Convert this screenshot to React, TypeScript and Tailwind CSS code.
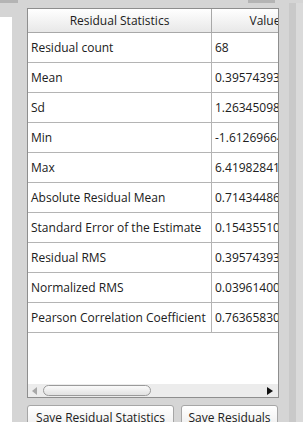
import React from "react";

const rows: [string, string][] = [
  ["Residual count", "68"],
  ["Mean", "0.395743936"],
  ["Sd", "1.263450981"],
  ["Min", "-1.612696641"],
  ["Max", "6.419828411"],
  ["Absolute Residual Mean", "0.714344861"],
  ["Standard Error of the Estimate", "0.154355101"],
  ["Residual RMS", "0.395743936"],
  ["Normalized RMS", "0.039614001"],
  ["Pearson Correlation Coefficient", "0.763658301"],
];

export default function App() {
  return (
    <div
      className="flex h-[422px] w-[303px] flex-col overflow-hidden bg-[#d5d5d5] text-[12px] text-[#202020]"
      style={{ fontFamily: '"Open Sans", "Noto Sans", sans-serif' }}
    >
      {/* bits of widgets above */}
      <div className="flex h-[3px] shrink-0">
        <div className="w-[18px] bg-[#b4b4b4]" />
        <div className="ml-[230px] w-[27px] bg-[#b4b4b4]" />
      </div>

      <div className="flex flex-1">
        {/* left pane */}
        <div className="flex w-[12px] flex-col">
          <div className="h-[14px]" />
          <div className="flex-1 bg-white" />
        </div>

        <div className="w-[15px]" />

        {/* main panel */}
        <div className="flex w-[252px] flex-col pt-[5px]">
          <div className="flex h-[390px] flex-col border border-[#8e8e8e] bg-white">
            <div className="flex-1 overflow-hidden">
              <div className="w-[290px]">
                <div className="flex h-[24px] border-b border-[#a8a8a8] bg-gradient-to-b from-white to-[#e8e8e8]">
                  <div className="flex w-[184px] items-center justify-center border-r border-[#a8a8a8]">
                    Residual Statistics
                  </div>
                  <div className="flex w-[106px] items-center justify-center">Value</div>
                </div>
                {rows.map(([k, v]) => (
                  <div key={k} className="flex h-[30px] border-b border-[#b4b4b4]">
                    <div className="flex w-[184px] items-center whitespace-nowrap border-r border-[#b4b4b4] pl-[3px]">
                      {k}
                    </div>
                    <div className="flex w-[106px] items-center whitespace-nowrap pl-[3px]">{v}</div>
                  </div>
                ))}
              </div>
            </div>

            {/* horizontal scrollbar */}
            <div className="flex h-[13px] items-center bg-[#ececec] px-[3px]">
              <svg width="7" height="8" viewBox="0 0 7 8" className="shrink-0">
                <path d="M6 0 L1 4 L6 8 Z" fill="#a8a8a8" />
              </svg>
              <div className="ml-[5px] h-[11px] w-[108px] rounded-full border border-[#9a9a9a] bg-gradient-to-b from-[#fafafa] to-[#e2e2e2]" />
              <div className="flex-1" />
              <svg width="7" height="8" viewBox="0 0 7 8" className="mr-[1px] shrink-0">
                <path d="M0 0 L6 4 L0 8 Z" fill="#111" />
              </svg>
            </div>
          </div>

          <div className="mt-[7px] flex gap-[7px]">
            <button className="h-[22px] w-[147px] rounded-[3px] border border-[#a6a6a6] bg-gradient-to-b from-white to-[#efefef] pt-[3px] leading-none">
              Save Residual Statistics
            </button>
            <button className="h-[22px] w-[97px] rounded-[3px] border border-[#a6a6a6] bg-gradient-to-b from-white to-[#efefef] pt-[3px] leading-none">
              Save Residuals
            </button>
          </div>
        </div>

        {/* right splitter */}
        <div className="w-[10px]" />
        <div className="w-[7px] bg-[#c9c9c9]" />
        <div className="flex-1 bg-[#dadada]" />
      </div>
    </div>
  );
}
